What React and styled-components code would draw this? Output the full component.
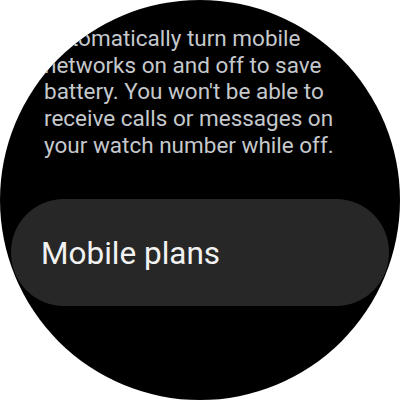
import styled, { createGlobalStyle } from 'styled-components';

const GlobalStyle = createGlobalStyle`
   html, body {
      margin: 0;
      padding: 0;
      background: #ffffff;
   }
`;

const Screen = styled.div`
   width: 400px;
   height: 400px;
   border-radius: 50%;
   overflow: hidden;
   background-color: #000000;
   font-family: Roboto, 'Liberation Sans', sans-serif;
   display: flex;
   flex-direction: column;
`;

const Description = styled.p`
   margin: 0;
   padding: 25px 0 0 44px;
   font-size: 22.5px;
   line-height: 26.7px;
   color: #c5c8cc;
   white-space: pre-line;
`;

const ListItem = styled.button`
   margin: 40px 11px 0 11px;
   height: 107px;
   border: 0;
   border-radius: 53px;
   background-color: #272727;
   display: flex;
   align-items: center;
   padding: 3px 0 0 30px;
   font-family: inherit;
   font-size: 31.5px;
   color: #f2f2f2;
   text-align: left;
   cursor: pointer;
`;

function App() {
   return (
      <>
         <GlobalStyle />
         <Screen>
            <Description>
               {`Automatically turn mobile
networks on and off to save
battery. You won't be able to
receive calls or messages on
your watch number while off.`}
            </Description>
            <ListItem>Mobile plans</ListItem>
         </Screen>
      </>
   );
}

export default App;
